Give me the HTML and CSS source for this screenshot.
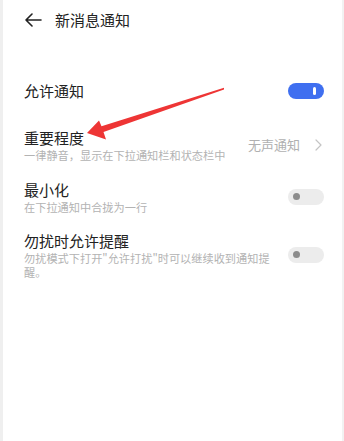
FILE: index.html
```html
<!DOCTYPE html>
<html lang="zh">
<head>
<meta charset="utf-8">
<link rel="stylesheet" href="styles.css">
</head>
<body>
<div class="page">
  <header class="header">
    <svg class="back" width="18" height="14" viewBox="0 0 18 14"><path d="M17 7H2M8 1L2 7l6 6" fill="none" stroke="#222" stroke-width="1.6" stroke-linecap="round" stroke-linejoin="round"/></svg>
    <span class="title">新消息通知</span>
  </header>
  <div class="list">
    <div class="row row-first">
      <div class="text"><div class="label">允许通知</div></div>
      <div class="toggle on"><span class="knob"></span></div>
    </div>
    <div class="row row-second">
      <div class="text">
        <div class="label">重要程度</div>
        <div class="sub">一律静音，显示在下拉通知栏和状态栏中</div>
      </div>
      <div class="value">无声通知
        <svg class="chev" width="7" height="12" viewBox="0 0 7 12"><path d="M1 1l5 5-5 5" fill="none" stroke="#c4c4c4" stroke-width="1.2" stroke-linecap="round" stroke-linejoin="round"/></svg>
      </div>
    </div>
    <div class="row">
      <div class="text">
        <div class="label">最小化</div>
        <div class="sub">在下拉通知中合拢为一行</div>
      </div>
      <div class="toggle"><span class="dot"></span></div>
    </div>
    <div class="row row-last">
      <div class="text">
        <div class="label">勿扰时允许提醒</div>
        <div class="sub">勿扰模式下打开"允许打扰"时可以继续收到通知提醒。</div>
      </div>
      <div class="toggle"><span class="dot"></span></div>
    </div>
  </div>
  <svg class="arrow" width="344" height="441" viewBox="0 0 344 441">
    <polygon points="224,87.8 101.5,126.3 99,120.5 87,133 106,139.5 103.5,132 224,89.6" fill="#ee3535"/>
  </svg>
</div>
</body>
</html>
```
FILE: styles.css
```css
html, body {
  margin: 0;
  padding: 0;
  background: #fff;
}
body {
  font-family: "Noto Sans CJK SC", "Noto Sans", sans-serif;
  color: #222;
}
.page {
  position: relative;
  width: 344px;
  height: 441px;
  box-sizing: border-box;
  border-left: 3px solid #efefef;
  border-right: 2px solid #f2f2f2;
  background: #fff;
  overflow: hidden;
}
.header {
  height: 40px;
  display: flex;
  align-items: center;
  padding-left: 21px;
}
.back {
  display: block;
}
.title {
  margin-left: 13px;
  font-size: 15px;
  line-height: 20px;
}
.list {
  padding-top: 28px;
}
.row {
  display: flex;
  align-items: center;
  justify-content: space-between;
  padding: 9px 18px 8px 21px;
}
.row-first {
  padding-top: 12px;
  padding-bottom: 5px;
}
.row-second {
  padding-top: 21px;
}
.row-last {
  padding-top: 8px;
}
.text {
  flex: 1;
  min-width: 0;
}
.label {
  font-size: 15px;
  line-height: 21px;
}
.sub {
  font-size: 11.2px;
  line-height: 14px;
  color: #b3b3b3;
  max-width: 252px;
}
.value {
  display: flex;
  align-items: center;
  font-size: 13px;
  color: #b0b0b0;
}
.chev {
  margin-left: 15px;
  margin-right: 2px;
}
.toggle {
  position: relative;
  width: 36px;
  height: 16px;
  border-radius: 8px;
  background: #ececec;
  flex-shrink: 0;
}
.toggle.on {
  background: #3f6ff0;
}
.knob {
  position: absolute;
  right: 8px;
  top: 4px;
  width: 3px;
  height: 8px;
  border-radius: 1.5px;
  background: #fff;
}
.dot {
  position: absolute;
  left: 5px;
  top: 4.5px;
  width: 7px;
  height: 7px;
  border-radius: 50%;
  background: #8c8c8c;
}
.arrow {
  position: absolute;
  left: -3px;
  top: 0;
  pointer-events: none;
}
```
